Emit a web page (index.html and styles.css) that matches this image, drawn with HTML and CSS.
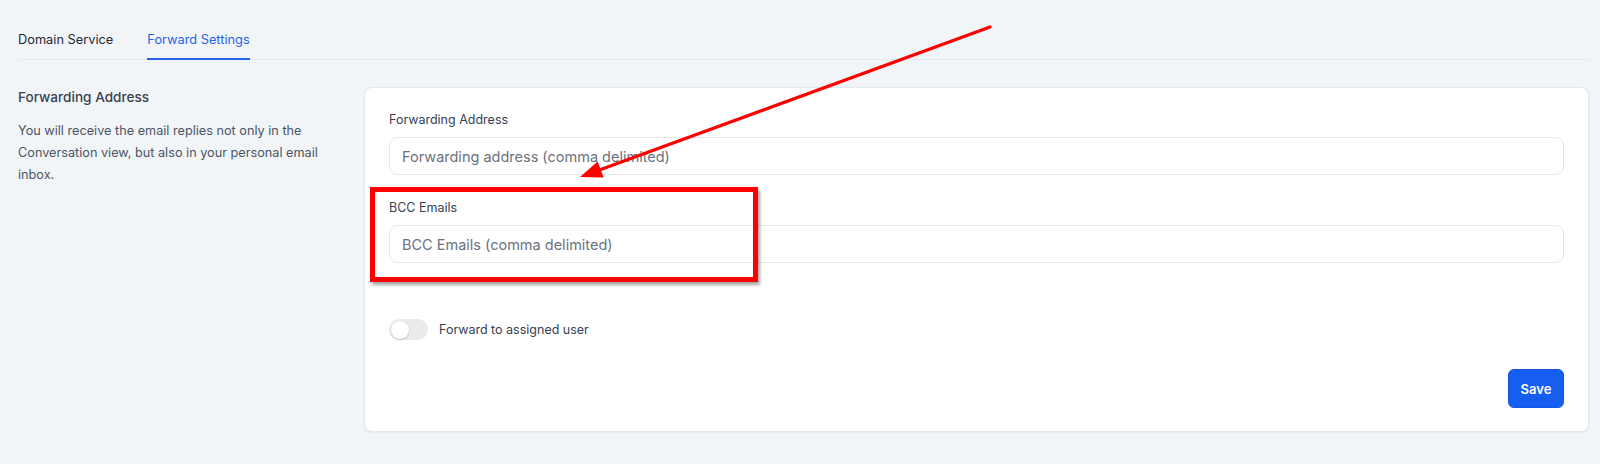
FILE: index.html
```html
<!DOCTYPE html>
<html lang="en">
<head>
<meta charset="utf-8">
<title>Forward Settings</title>
<link rel="stylesheet" href="styles.css">
</head>
<body>
<div class="page">
  <nav class="tabs">
    <a class="tab">Domain Service</a>
    <a class="tab active">Forward Settings</a>
  </nav>
  <section class="content">
    <div class="intro">
      <h2 class="intro-title">Forwarding Address</h2>
      <p class="intro-text">You will receive the email replies not only in the Conversation view, but also in your personal email inbox.</p>
    </div>
    <div class="card">
      <div class="field">
        <label class="field-label">Forwarding Address</label>
        <input class="field-input" type="text" placeholder="Forwarding address (comma delimited)">
      </div>
      <div class="field">
        <label class="field-label">BCC Emails</label>
        <input class="field-input" type="text" placeholder="BCC Emails (comma delimited)">
      </div>
      <div class="switch-row">
        <span class="switch"><span class="knob"></span></span>
        <span class="switch-label">Forward to assigned user</span>
      </div>
      <div class="actions">
        <button class="btn-save">Save</button>
      </div>
    </div>
  </section>
  <div class="highlight"></div>
  <svg class="arrow" width="1600" height="464" viewBox="0 0 1600 464">
    <line x1="990" y1="27" x2="598" y2="170.5" stroke="#ff0000" stroke-width="3.2" stroke-linecap="round"/>
    <polygon points="580,177 603.6,177.4 597.6,161.4" fill="#ff0000"/>
  </svg>
</div>
</body>
</html>
```
FILE: styles.css
```css
* { box-sizing: border-box; }
html, body { margin: 0; padding: 0; }
body {
  background: #f2f5f8;
  font-family: Inter, "Noto Sans", sans-serif;
  color: #374151;
  width: 1600px;
  height: 464px;
  overflow: hidden;
}
.page {
  position: relative;
  padding: 0 11px 0 18px;
  height: 464px;
}
.tabs {
  display: flex;
  gap: 34px;
  padding-top: 30px;
  border-bottom: 1px solid #e5e9ef;
}
.tab {
  font-size: 12.8px;
  line-height: 20px;
  color: #1f2937;
  padding-bottom: 8px;
  border-bottom: 2px solid transparent;
  margin-bottom: -1px;
}
.tab.active {
  color: #2563eb;
  border-bottom-color: #2563eb;
}
.content {
  display: flex;
  gap: 30px;
  margin-top: 27px;
  align-items: flex-start;
}
.intro {
  width: 316px;
  flex: none;
}
.intro-title {
  margin: 0;
  font-size: 13.6px;
  line-height: 20px;
  font-weight: 500;
  color: #374151;
}
.intro-text {
  margin: 13px 0 0;
  font-size: 12.7px;
  line-height: 22px;
  color: #4b5563;
}
.card {
  flex: 1;
  background: #ffffff;
  border: 1px solid #e4e7ec;
  border-radius: 8px;
  box-shadow: 0 1px 2px rgba(16, 24, 40, 0.06);
  padding: 22px 24px 23px;
  height: 345px;
}
.field { margin-bottom: 23px; }
.field:nth-child(2) { margin-bottom: 0; }
.field-label {
  display: block;
  font-size: 12.5px;
  line-height: 20px;
  color: #374151;
  margin-bottom: 7px;
}
.field-input {
  display: block;
  width: 100%;
  height: 38px;
  border: 1px solid #e5e7eb;
  border-radius: 8px;
  padding: 0 12px;
  font-family: inherit;
  font-size: 14.5px;
  color: #374151;
  background: #fff;
  outline: none;
}
.field-input::placeholder { color: #6b7280; }
.switch-row {
  display: flex;
  align-items: center;
  gap: 11px;
  margin-top: 56px;
}
.switch {
  width: 39px;
  height: 21px;
  border-radius: 11px;
  background: #e9eaec;
  display: flex;
  align-items: center;
  padding: 0 2px;
}
.knob {
  width: 18px;
  height: 18px;
  border-radius: 50%;
  background: #ffffff;
  box-shadow: 0 1px 2px rgba(16, 24, 40, 0.2);
}
.switch-label {
  font-size: 12.5px;
  color: #374151;
}
.actions {
  display: flex;
  justify-content: flex-end;
  margin-top: 29px;
}
.btn-save {
  width: 56px;
  height: 39px;
  border: 1px solid #1557e0;
  border-radius: 6px;
  background: #155eef;
  color: #ffffff;
  font-family: inherit;
  font-size: 13px;
  font-weight: 600;
  padding: 0;
}
.highlight {
  position: absolute;
  left: 370px;
  top: 187px;
  width: 388px;
  height: 95px;
  border: 5px solid #ff0000;
  box-shadow: 2px 3px 3px rgba(0, 0, 0, 0.35);
}
.arrow {
  position: absolute;
  left: 0;
  top: 0;
  pointer-events: none;
}
```
